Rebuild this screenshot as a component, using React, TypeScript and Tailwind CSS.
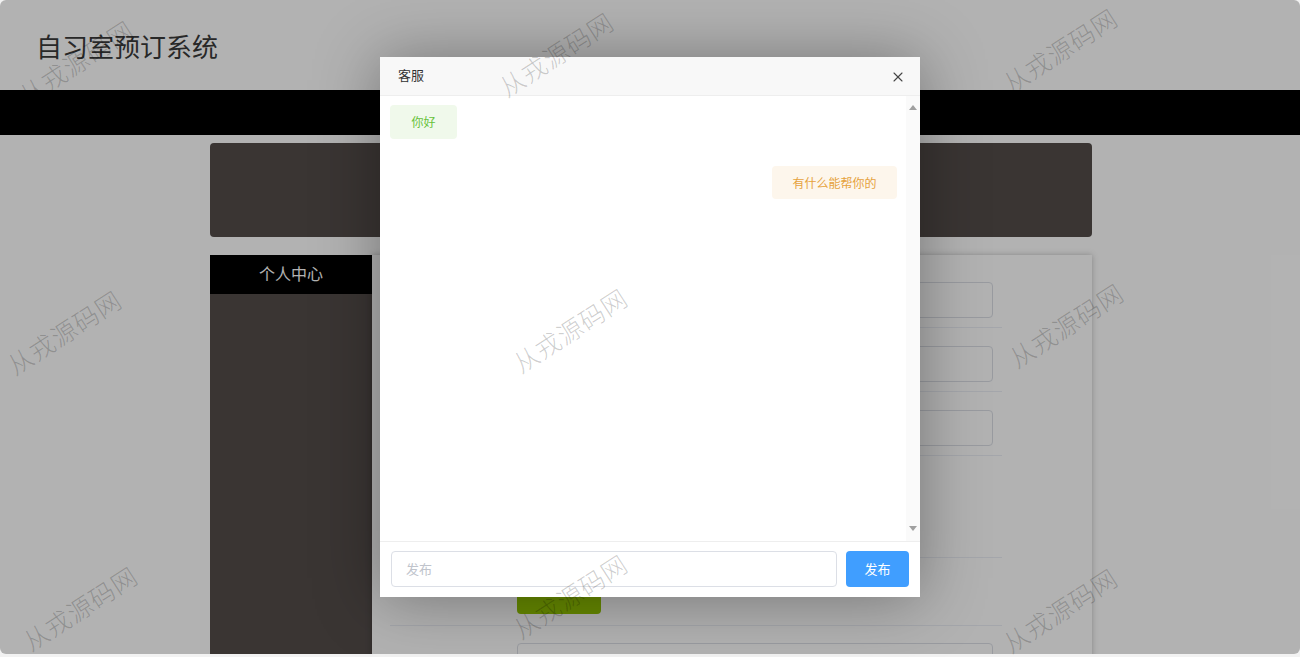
import { X } from 'lucide-react'

const marks = [
    'left-[76px] top-[62px]',
    'left-[556px] top-[54px]',
    'left-[1060px] top-[50px]',
    'left-[64px] top-[332px]',
    'left-[570px] top-[330px]',
    'left-[1066px] top-[325px]',
    'left-[80px] top-[608px]',
    'left-[570px] top-[596px]',
    'left-[1060px] top-[610px]',
]

function FormRow({ h, children }: { h: string; children?: React.ReactNode }) {
    return (
        <div className={`flex items-end border-b border-[#ebeef5] pb-[9px] pl-[127px] ${h}`}>
            {children}
        </div>
    )
}

export default function App() {
    return (
        <div className="relative h-[657px] w-[1300px] overflow-hidden bg-[#f2f2f2] font-['Noto_Sans_CJK_SC',sans-serif]">
            {/* page */}
            <div className="h-[654px] overflow-hidden rounded-md bg-white">
                <div className="flex h-[90px] items-center pl-[36px]">
                    <h1 className="text-[26px] text-[#3a3a3a]">自习室预订系统</h1>
                </div>
                <div className="h-[45px] bg-black" />
                <div className="ml-[210px] mt-2 w-[882px]">
                    <div className="h-[94px] rounded bg-[#534c4a]" />
                    <div className="mt-[18px] flex h-[420px]">
                        <div className="w-[162px] bg-[#534c4a]">
                            <div className="flex h-[39px] items-center justify-center bg-black pb-[3px] text-[16px] text-white">
                                个人中心
                            </div>
                        </div>
                        <div className="flex-1 bg-white pl-[18px] pt-[10px] shadow-[0_0_6px_rgba(0,0,0,0.25)]">
                            <div className="w-[612px]">
                                <FormRow h="h-[63px]">
                                    <div className="h-9 w-[476px] rounded border border-[#dcdfe6]" />
                                </FormRow>
                                <FormRow h="h-[64px]">
                                    <div className="h-9 w-[476px] rounded border border-[#dcdfe6]" />
                                </FormRow>
                                <FormRow h="h-[64px]">
                                    <div className="h-9 w-[476px] rounded border border-[#dcdfe6]" />
                                </FormRow>
                                <FormRow h="h-[102px]" />
                                <div className="flex h-[68px] items-end border-b border-[#ebeef5] pb-[11px] pl-[127px]">
                                    <div className="h-[34px] w-[84px] rounded bg-[#92c500]" />
                                </div>
                                <div className="pl-[127px] pt-[17px]">
                                    <div className="h-9 w-[476px] rounded border border-[#dcdfe6]" />
                                </div>
                            </div>
                        </div>
                    </div>
                </div>
            </div>

            {/* mask */}
            <div className="absolute inset-x-0 top-0 h-[654px] rounded-md bg-black/30" />

            {/* dialog */}
            <div className="absolute left-[380px] top-[57px] flex h-[540px] w-[540px] flex-col bg-white shadow-[0_2px_60px_rgba(0,0,0,0.35)]">
                <div className="flex h-[39px] items-center justify-between border-b border-[#eeeeee] bg-[#f8f8f8] pl-[18px] pr-[14px]">
                    <span className="mb-[2px] text-[13px] text-[#333]">客服</span>
                    <X size={16} strokeWidth={1.6} className="mt-[2px] text-[#444]" />
                </div>
                <div className="flex flex-1">
                    <div className="flex flex-1 flex-col px-[10px] pt-[9px]">
                        <div className="flex">
                            <div className="flex h-[34px] w-[67px] items-center justify-center rounded bg-[#f0f9eb] text-[12px] text-[#67c23a]">
                                你好
                            </div>
                        </div>
                        <div className="mt-[27px] flex justify-end">
                            <div className="-mr-[1px] flex h-[33px] w-[125px] items-center justify-center rounded bg-[#fdf6ec] text-[12px] text-[#e6a23c]">
                                有什么能帮你的
                            </div>
                        </div>
                    </div>
                    <div className="flex w-[14px] flex-col items-center justify-between bg-[#fafafa] pb-[10px] pt-[9px]">
                        <div className="h-0 w-0 border-x-[4px] border-b-[5px] border-x-transparent border-b-[#a0a0a0]" />
                        <div className="h-0 w-0 border-x-[4px] border-t-[5px] border-x-transparent border-t-[#a0a0a0]" />
                    </div>
                </div>
                <div className="flex h-[56px] items-center gap-[9px] border-t border-[#eeeeee] px-[11px] pb-[2px]">
                    <div className="flex h-9 flex-1 items-center rounded border border-[#dcdfe6] px-[14px] text-[13px] text-[#c0c4cc]">
                        发布
                    </div>
                    <div className="flex h-9 w-[63px] items-center justify-center rounded bg-[#409eff] text-[13px] text-white">
                        发布
                    </div>
                </div>
            </div>

            {/* watermarks */}
            {marks.map((m, i) => (
                <div
                    key={i}
                    className={`pointer-events-none absolute ${m} -translate-x-1/2 -translate-y-1/2 -rotate-[33deg] whitespace-nowrap text-[25px] font-light tracking-[1px] text-black/20`}
                >
                    从戎源码网
                </div>
            ))}
        </div>
    )
}
